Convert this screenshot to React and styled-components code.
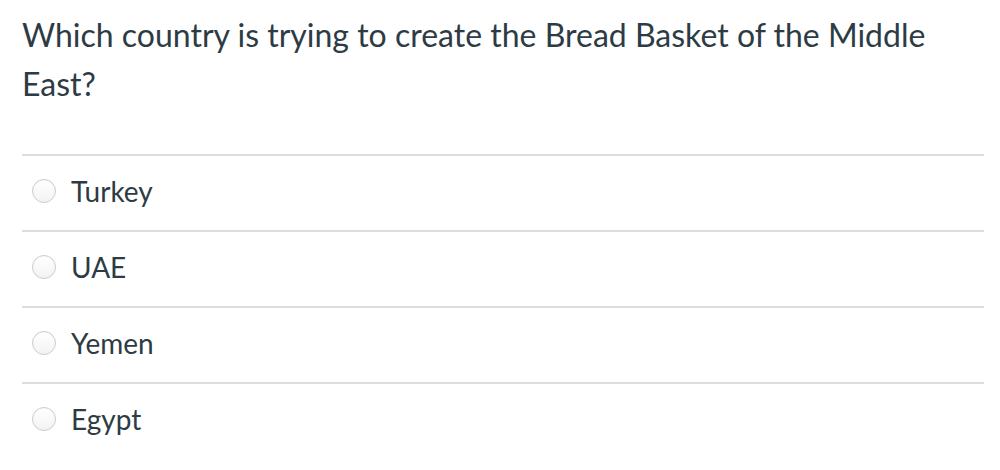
import React from 'react';
import styled, { createGlobalStyle } from 'styled-components';

const Global = createGlobalStyle`
  html, body { margin: 0; padding: 0; background: #fff; }
  body { font-family: Lato, "Noto Sans", sans-serif; color: #2d3b45; }
`;

const Page = styled.div`
  padding: 10px 16px 0 22px;
  width: 962px;
`;

const Question = styled.div`
  font-size: 32px;
  line-height: 49px;
  margin: 0 0 46px;
`;

const Answers = styled.div`
  display: flex;
  flex-direction: column;
`;

const Answer = styled.label`
  display: flex;
  align-items: center;
  gap: 15px;
  height: 76px;
  box-sizing: border-box;
  padding: 0 0 4px 10px;
  border-top: 2px solid #dddddd;
  font-size: 28px;
  cursor: pointer;
`;

const Radio = styled.span`
  width: 22px;
  height: 22px;
  border-radius: 50%;
  border: 1px solid #cccccc;
  background: linear-gradient(#ffffff, #f3f3f3);
  box-shadow: inset 0 1px 1px rgba(0, 0, 0, 0.03);
  flex: none;
`;

const options = ['Turkey', 'UAE', 'Yemen', 'Egypt'];

export default function App() {
  return (
    <Page>
      <Global />
      <Question>
        Which country is trying to create the Bread Basket of the Middle East?
      </Question>
      <Answers>
        {options.map((o) => (
          <Answer key={o}>
            <Radio />
            {o}
          </Answer>
        ))}
      </Answers>
    </Page>
  );
}
